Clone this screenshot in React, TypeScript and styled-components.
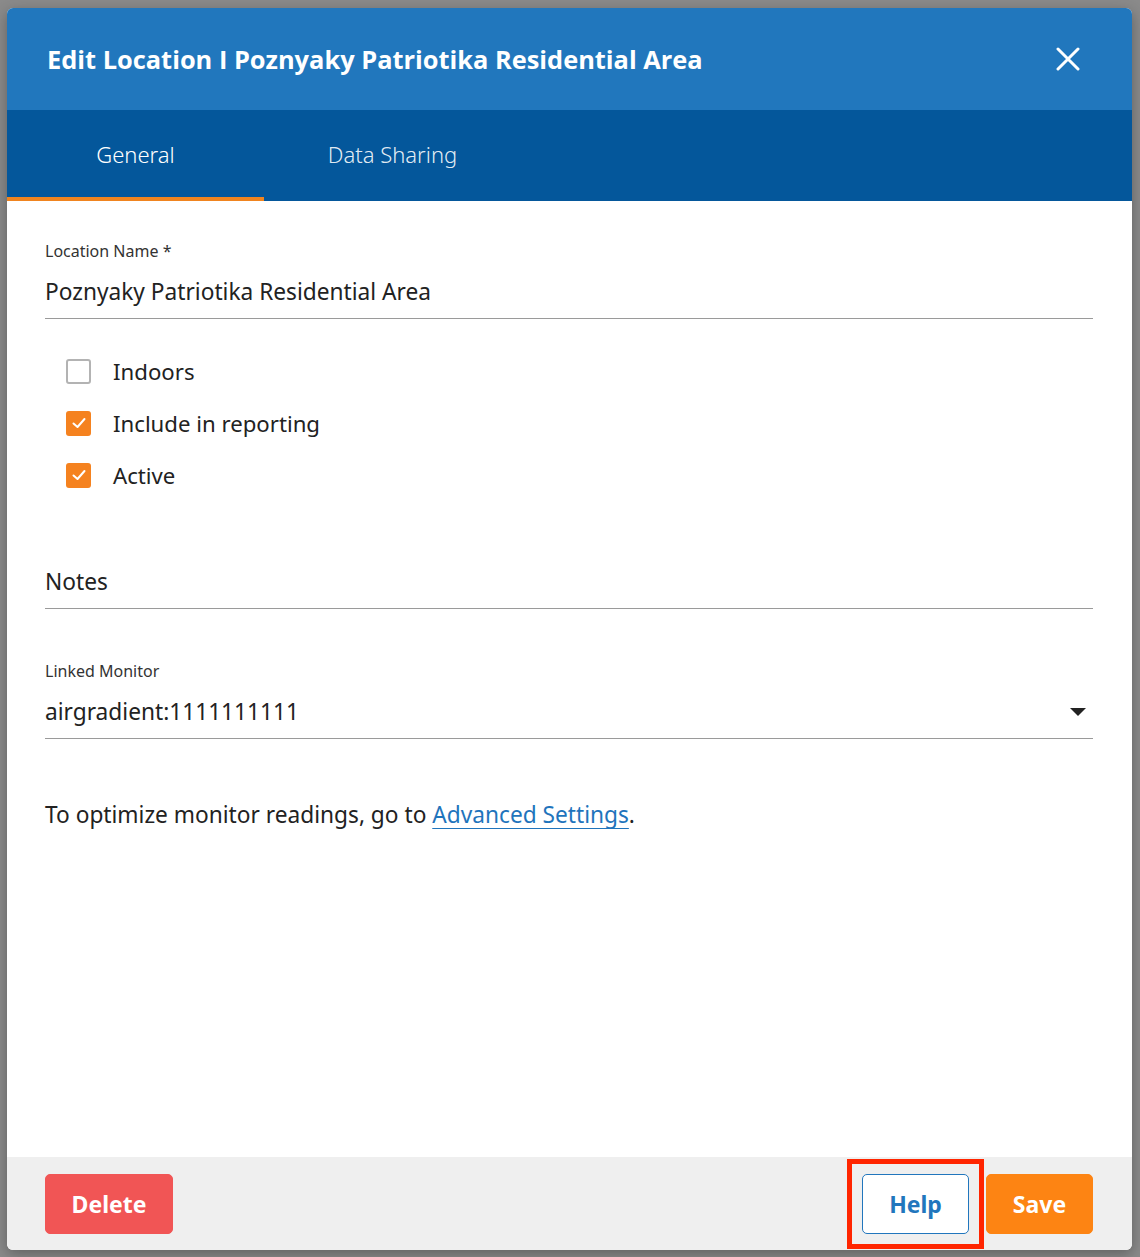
import styled, { createGlobalStyle } from "styled-components";

const GlobalStyle = createGlobalStyle`
    html, body {
        margin: 0;
        padding: 0;
        background: #8a8a8a;
        font-family: "Noto Sans", "Open Sans", sans-serif;
    }
`

interface CheckProps {
    label: string;
    checked: boolean;
}

function CheckRow({label, checked}:CheckProps){
    return (
        <CheckLine>
            <Box checked={checked}>
                {checked && (
                    <svg width="18" height="18" viewBox="0 0 18 18">
                        <path d="M3.5 9.5 L7.5 13 L14.5 5" fill="none" stroke="#fff" strokeWidth="2" strokeLinecap="round" strokeLinejoin="round"/>
                    </svg>
                )}
            </Box>
            <CheckLabel>{label}</CheckLabel>
        </CheckLine>
    )
}

function App(){
    return (
        <Page>
            <GlobalStyle/>
            <Dialog>
                <Header>
                    <Title>Edit Location I Poznyaky Patriotika Residential Area</Title>
                    <Close>
                        <svg width="24" height="24" viewBox="0 0 24 24">
                            <path d="M2 2 L22 22 M22 2 L2 22" stroke="#fff" strokeWidth="3" strokeLinecap="round"/>
                        </svg>
                    </Close>
                </Header>
                <Tabs>
                    <Tab active>General</Tab>
                    <Tab>Data Sharing</Tab>
                </Tabs>
                <Body>
                    <Field>
                        <SmallLabel>Location Name *</SmallLabel>
                        <Value>Poznyaky Patriotika Residential Area</Value>
                    </Field>
                    <Checks>
                        <CheckRow label="Indoors" checked={false}/>
                        <CheckRow label="Include in reporting" checked/>
                        <CheckRow label="Active" checked/>
                    </Checks>
                    <NotesField>
                        <Value>Notes</Value>
                    </NotesField>
                    <MonitorField>
                        <SmallLabel>Linked Monitor</SmallLabel>
                        <SelectRow>
                            <Value>airgradient:1111111111</Value>
                            <Caret/>
                        </SelectRow>
                    </MonitorField>
                    <Hint>
                        To optimize monitor readings, go to <Link>Advanced Settings</Link>.
                    </Hint>
                </Body>
                <Footer>
                    <Button kind="delete">Delete</Button>
                    <Right>
                        <Marked>
                            <Button kind="help">Help</Button>
                        </Marked>
                        <Button kind="save">Save</Button>
                    </Right>
                </Footer>
            </Dialog>
        </Page>
    )
}

const Page = styled.div`
    min-height: 1257px;
    padding: 8px 8px 7px 7px;
    box-sizing: border-box;
`
const Dialog = styled.div`
    width: 1125px;
    height: 1242px;
    display: flex;
    flex-direction: column;
    border-radius: 6px;
    overflow: hidden;
    background: #fff;
    box-shadow: 0 4px 14px rgba(0,0,0,0.3);
`
const Header = styled.div`
    height: 102px;
    flex-shrink: 0;
    background: #2177bd;
    display: flex;
    align-items: center;
    justify-content: space-between;
    padding: 0 52px 0 40px;
`
const Title = styled.div`
    color: #fff;
    font-family: "Open Sans", "Noto Sans", sans-serif;
    font-size: 25.4px;
    font-weight: 700;
`
const Close = styled.div`
    display: flex;
    width: 24px;
    height: 24px;
`
const Tabs = styled.div`
    height: 91px;
    flex-shrink: 0;
    background: #04579b;
    display: flex;
`
const Tab = styled.div<{active?: boolean}>`
    width: 257px;
    display: flex;
    align-items: center;
    justify-content: center;
    font-size: 22px;
    font-weight: 300;
    color: ${p => p.active ? "#fff" : "rgba(255,255,255,0.9)"};
    box-sizing: border-box;
    border-bottom: 4px solid ${p => p.active ? "#f0841f" : "transparent"};
`
const Body = styled.div`
    flex: 1;
    padding: 39px 39px 0 38px;
    display: flex;
    flex-direction: column;
    color: #222;
`
const Field = styled.div`
    display: flex;
    flex-direction: column;
    border-bottom: 1.5px solid #9a9a9a;
    padding-bottom: 11px;
`
const NotesField = styled(Field)`
    margin-top: 77px;
`
const MonitorField = styled(Field)`
    margin-top: 51px;
`
const SmallLabel = styled.div`
    font-size: 16px;
    color: #333;
    margin-bottom: 15px;
`
const Value = styled.div`
    font-size: 22.7px;
    color: #222;
    line-height: 30px;
`
const Checks = styled.div`
    display: flex;
    flex-direction: column;
    gap: 22px;
    padding: 37px 0 0 21px;
`
const CheckLine = styled.div`
    display: flex;
    align-items: center;
    gap: 22px;
    height: 30px;
`
const Box = styled.div<{checked: boolean}>`
    width: 25px;
    height: 25px;
    box-sizing: border-box;
    border-radius: 3px;
    display: flex;
    align-items: center;
    justify-content: center;
    background: ${p => p.checked ? "#f5821f" : "#fff"};
    border: ${p => p.checked ? "none" : "2px solid #b3b3b3"};
`
const CheckLabel = styled.div`
    font-size: 22.2px;
    color: #222;
`
const SelectRow = styled.div`
    display: flex;
    align-items: center;
    justify-content: space-between;
    padding-right: 7px;
`
const Caret = styled.div`
    width: 0;
    height: 0;
    border-left: 8px solid transparent;
    border-right: 8px solid transparent;
    border-top: 8px solid #222;
`
const Hint = styled.div`
    margin-top: 60px;
    font-size: 22.7px;
    color: #222;
`
const Link = styled.span`
    color: #1f74bc;
    text-decoration: underline;
    text-underline-offset: 5px;
    text-decoration-thickness: 1px;
`
const Footer = styled.div`
    height: 93px;
    flex-shrink: 0;
    background: #efefef;
    display: flex;
    align-items: center;
    justify-content: space-between;
    padding: 0 39px 0 38px;
    box-sizing: border-box;
`
const Right = styled.div`
    display: flex;
    align-items: center;
    gap: 17px;
`
const Marked = styled.div`
    display: flex;
    outline: 5px solid #ff2500;
    outline-offset: 10px;
`
const colors = {
    delete: { bg: "#f15555", fg: "#fff", border: "#f15555", width: "128px" },
    help: { bg: "#fff", fg: "#2176bd", border: "#2176bd", width: "107px" },
    save: { bg: "#fd8413", fg: "#fff", border: "#fd8413", width: "107px" },
}
const Button = styled.div<{kind: "delete" | "help" | "save"}>`
    width: ${p => colors[p.kind].width};
    height: 60px;
    box-sizing: border-box;
    border-radius: 5px;
    display: flex;
    align-items: center;
    justify-content: center;
    font-size: 23px;
    font-weight: 700;
    background: ${p => colors[p.kind].bg};
    color: ${p => colors[p.kind].fg};
    border: 1px solid ${p => colors[p.kind].border};
`

export default App
